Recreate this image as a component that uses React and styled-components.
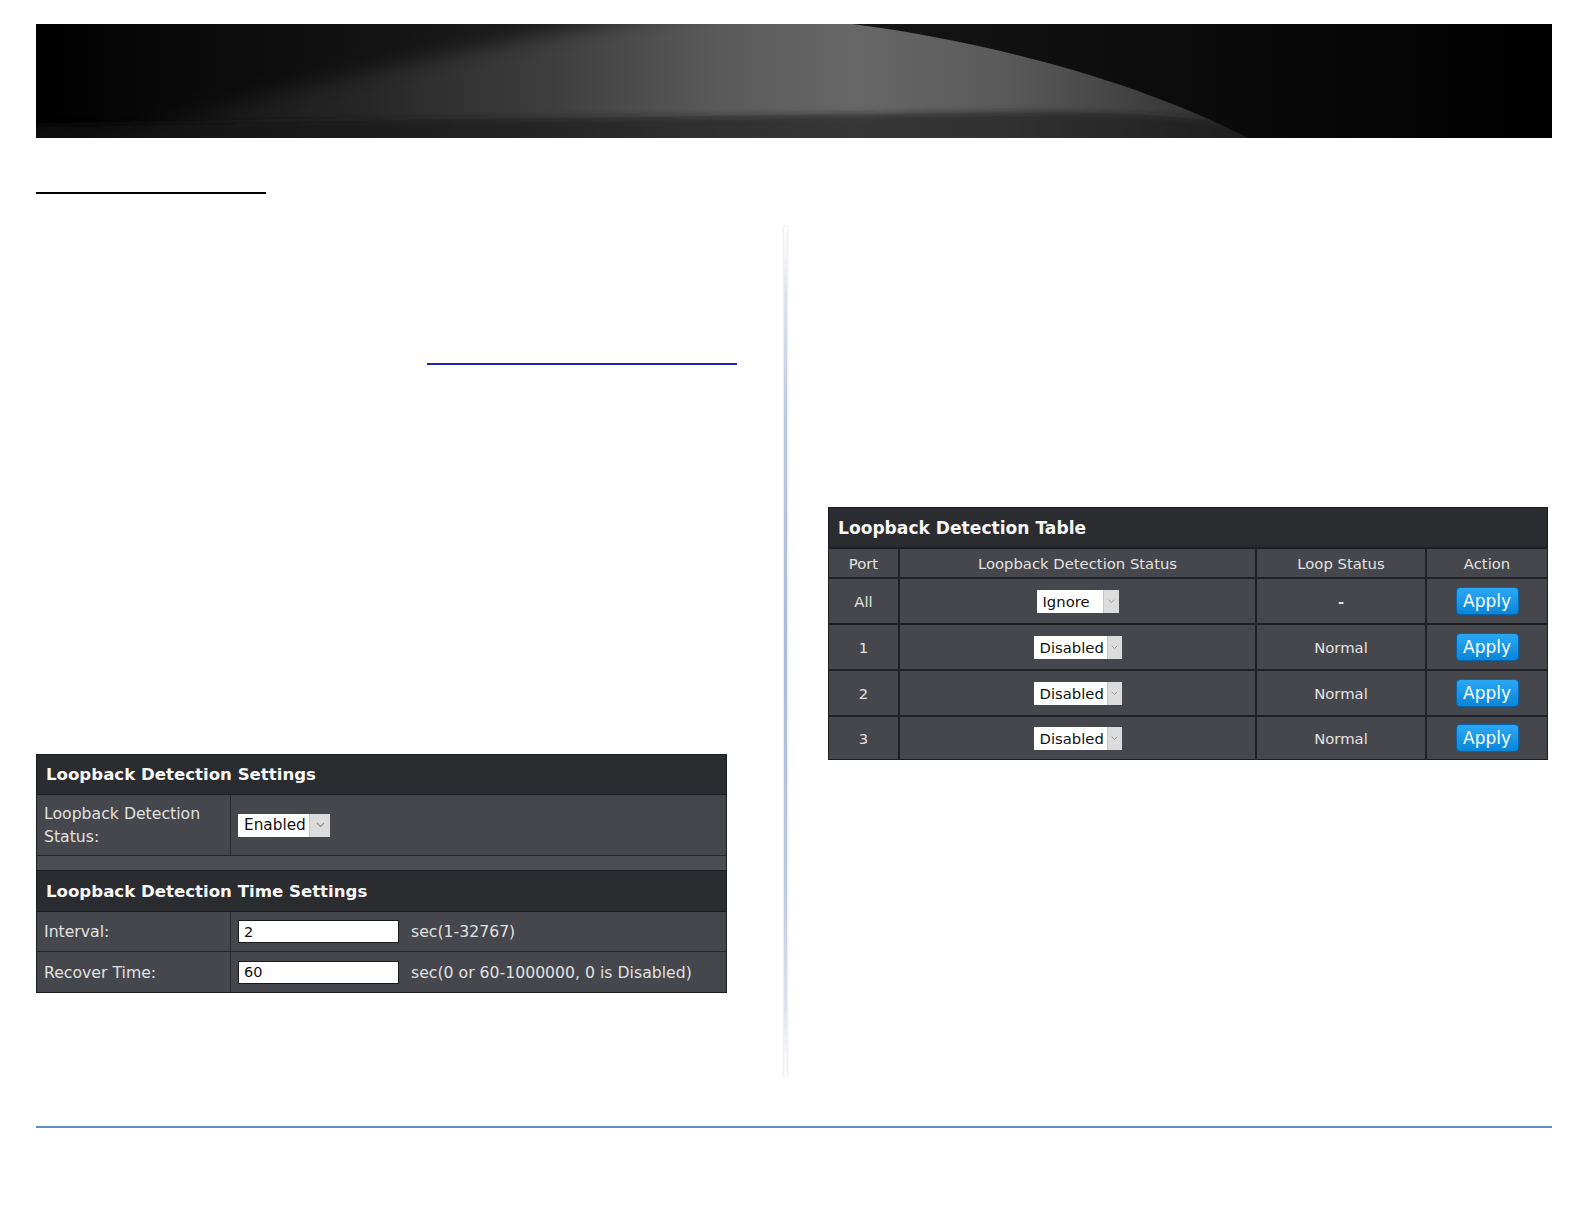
import React from "react";
import styled, { createGlobalStyle } from "styled-components";

const GlobalStyle = createGlobalStyle`
  body {
    margin: 0;
    background: #fff;
    font-family: "DejaVu Sans", Verdana, sans-serif;
  }
`;

const Page = styled.div`
  width: 1584px;
  min-height: 1224px;
  box-sizing: border-box;
  padding: 24px 0 0 36px;
`;

const BannerBox = styled.div`
  width: 1516px;
  height: 114px;
  line-height: 0;
  overflow: hidden;
`;

const HeadingRule = styled.div`
  margin-top: 54px;
  width: 230px;
  height: 2px;
  background: #000;
`;

const Columns = styled.div`
  display: flex;
  margin-top: 6px;
`;

const LeftCol = styled.div`
  width: 748px;
  display: flex;
  flex-direction: column;
  align-items: flex-start;
`;

const LinkLine = styled.span`
  display: block;
  margin: 163px 0 0 391px;
  width: 310px;
  height: 2px;
  background: #2424a8;
`;

const Divider = styled.div`
  width: 3px;
  margin-top: 27px;
  height: 849px;
  background: linear-gradient(
    to bottom,
    rgba(225, 228, 235, 0) 0%,
    #e0e4ea 8%,
    #bccae0 22%,
    #a8bbd9 50%,
    #bccae0 78%,
    #e0e4ea 92%,
    rgba(225, 228, 235, 0) 100%
  );
  box-shadow: 0 0 3px rgba(180, 195, 220, 0.7);
`;

const RightCol = styled.div`
  margin-left: 41px;
  width: 720px;
`;

const BottomLine = styled.div`
  margin-top: 50px;
  width: 1516px;
  height: 2px;
  background: #5b8bc9;
`;

/* dark switch-ui panels */

const Panel = styled.div`
  width: 691px;
  box-sizing: border-box;
  margin-top: 389px;
  border: 1px solid #1c1d20;
  background: #46474c;
  color: #e0e0e0;
  font-size: 15.7px;
`;

const PanelTitle = styled.div`
  height: ${(p) => p.$h}px;
  box-sizing: border-box;
  display: flex;
  align-items: center;
  padding-left: 9px;
  background: #2b2c30;
  border-bottom: ${(p) => p.$line || 1}px solid #1c1d20;
  color: #f6f6f6;
  font-size: ${(p) => p.$fs || 16.6}px;
  font-weight: bold;
`;

const FormRow = styled.div`
  display: flex;
  height: ${(p) => p.$h}px;
  box-sizing: border-box;
  border-bottom: 1px solid #26272a;
  &:last-child {
    border-bottom: none;
  }
`;

const Label = styled.div`
  width: 194px;
  box-sizing: border-box;
  padding: 0 7px;
  display: flex;
  align-items: center;
  line-height: 23px;
  border-right: 1px solid #2a2b2e;
`;

const Value = styled.div`
  flex: 1;
  display: flex;
  align-items: center;
  gap: 12px;
  padding-left: 7px;
`;

const Spacer = styled.div`
  height: 15px;
  box-sizing: border-box;
  background: #4d4e53;
  border-bottom: 1px solid #1f2023;
`;

const TextInput = styled.input`
  width: 161px;
  height: 23px;
  box-sizing: border-box;
  margin: 0;
  padding: 0 5px;
  border: 1px solid #1a1a1a;
  background: #fff;
  color: #111;
  font-family: "DejaVu Sans", Verdana, sans-serif;
  font-size: 14.5px;
  outline: none;
`;

const SelectBox = styled.div`
  display: inline-flex;
  width: ${(p) => p.$w}px;
  height: 23px;
  background: #fff;
`;

const SelectText = styled.span`
  flex: 1;
  padding-left: 6px;
  color: #111;
  font-size: ${(p) => p.$fs}px;
  line-height: 23px;
  white-space: nowrap;
`;

const SelectArrow = styled.span`
  width: ${(p) => p.$aw}px;
  background: #dcdcdc;
  border-left: 1px solid #c6c6c6;
  display: flex;
  align-items: center;
  justify-content: center;
`;

const TableBox = styled.div`
  width: 720px;
  box-sizing: border-box;
  margin-top: 307px;
  border: 1px solid #1c1d20;
  background: #1f2023;
`;

const Grid = styled.div`
  display: grid;
  grid-template-columns: 69px 355px 168px 120px;
  grid-template-rows: 28px 44px 44px 44px 42px;
  gap: 2px;
`;

const Cell = styled.div`
  background: #46474c;
  display: flex;
  align-items: center;
  justify-content: center;
  color: #e2e2e2;
  font-size: 14.8px;
  font-weight: ${(p) => (p.$strong ? "bold" : "normal")};
`;

const ApplyButton = styled.button`
  width: 63px;
  height: 28px;
  margin: 0;
  padding: 0;
  border: 1px solid #0b63aa;
  border-radius: 4px;
  background: linear-gradient(#2ba8f4, #0a86d9);
  color: #fff;
  font-family: "DejaVu Sans", Verdana, sans-serif;
  font-size: 17px;
  line-height: 26px;
`;

const Chevron = ({ size }) => (
  <svg width={size} height={size * 0.6} viewBox="0 0 10 6">
    <path d="M1 1 L5 5 L9 1" fill="none" stroke="#8c8c8c" strokeWidth="1.2" />
  </svg>
);

const Select = ({ value, w, aw, fs, chev }) => (
  <SelectBox $w={w}>
    <SelectText $fs={fs}>{value}</SelectText>
    <SelectArrow $aw={aw}>
      <Chevron size={chev} />
    </SelectArrow>
  </SelectBox>
);

const Banner = () => (
  <BannerBox>
    <svg width="1516" height="114" viewBox="0 0 1516 114">
      <defs>
        <linearGradient id="bnBase" x1="0" y1="0" x2="1" y2="0">
          <stop offset="0" stopColor="#000" />
          <stop offset="0.08" stopColor="#121212" />
          <stop offset="0.22" stopColor="#272727" />
          <stop offset="0.34" stopColor="#3e3e3e" />
          <stop offset="0.45" stopColor="#5a5a5a" />
          <stop offset="0.54" stopColor="#676767" />
          <stop offset="0.64" stopColor="#5a5a5a" />
          <stop offset="0.73" stopColor="#404040" />
          <stop offset="0.8" stopColor="#2a2a2a" />
          <stop offset="0.88" stopColor="#101010" />
          <stop offset="1" stopColor="#000" />
        </linearGradient>
        <linearGradient id="bnDark" x1="0" y1="0" x2="1" y2="0">
          <stop offset="0" stopColor="#161616" />
          <stop offset="1" stopColor="#000" />
        </linearGradient>
        <filter id="bnBlur" x="-20%" y="-60%" width="140%" height="220%">
          <feGaussianBlur stdDeviation="9" />
        </filter>
        <filter id="bnBand" x="-10%" y="-60%" width="120%" height="220%">
          <feGaussianBlur stdDeviation="3" />
        </filter>
      </defs>
      <rect width="1516" height="114" fill="url(#bnBase)" />
      <path d="M-40 -40 H820 C560 0 300 40 -40 150 Z" fill="#000" opacity="0.5" filter="url(#bnBlur)" />
      <path
        d="M-40 160 V102 C300 96 700 92 950 88 C1080 86 1170 92 1232 106 V160 Z"
        fill="#161616"
        opacity="0.6"
        filter="url(#bnBand)"
      />
      <path d="M800 -2 C905 10 1080 45 1216 116 H1520 V-2 Z" fill="url(#bnDark)" />
    </svg>
  </BannerBox>
);

const rows = [
  { port: "All", status: "Ignore", w: 82, aw: 15, loop: "-" },
  { port: "1", status: "Disabled", w: 88, aw: 14, loop: "Normal" },
  { port: "2", status: "Disabled", w: 88, aw: 14, loop: "Normal" },
  { port: "3", status: "Disabled", w: 88, aw: 14, loop: "Normal" },
];

export default function App() {
  return (
    <>
      <GlobalStyle />
      <Page>
        <Banner />
        <HeadingRule />
        <Columns>
          <LeftCol>
            <LinkLine />
            <Panel>
              <PanelTitle $h={40}>Loopback Detection Settings</PanelTitle>
              <FormRow $h={61}>
                <Label>Loopback Detection Status:</Label>
                <Value>
                  <Select value="Enabled" w={92} aw={20} fs={15.3} chev={9} />
                </Value>
              </FormRow>
              <Spacer />
              <PanelTitle $h={41}>Loopback Detection Time Settings</PanelTitle>
              <FormRow $h={40}>
                <Label>Interval:</Label>
                <Value>
                  <TextInput defaultValue="2" />
                  <span>sec(1-32767)</span>
                </Value>
              </FormRow>
              <FormRow $h={40}>
                <Label>Recover Time:</Label>
                <Value>
                  <TextInput defaultValue="60" />
                  <span>sec(0 or 60-1000000, 0 is Disabled)</span>
                </Value>
              </FormRow>
            </Panel>
          </LeftCol>
          <Divider />
          <RightCol>
            <TableBox>
              <PanelTitle $h={41} $line={2} $fs={17.1}>
                Loopback Detection Table
              </PanelTitle>
              <Grid>
                <Cell>Port</Cell>
                <Cell>Loopback Detection Status</Cell>
                <Cell>Loop Status</Cell>
                <Cell>Action</Cell>
                {rows.map((r) => (
                  <React.Fragment key={r.port}>
                    <Cell>{r.port}</Cell>
                    <Cell>
                      <Select value={r.status} w={r.w} aw={r.aw} fs={14.8} chev={7} />
                    </Cell>
                    <Cell $strong={r.loop === "-"}>{r.loop}</Cell>
                    <Cell>
                      <ApplyButton>Apply</ApplyButton>
                    </Cell>
                  </React.Fragment>
                ))}
              </Grid>
            </TableBox>
          </RightCol>
        </Columns>
        <BottomLine />
      </Page>
    </>
  );
}
